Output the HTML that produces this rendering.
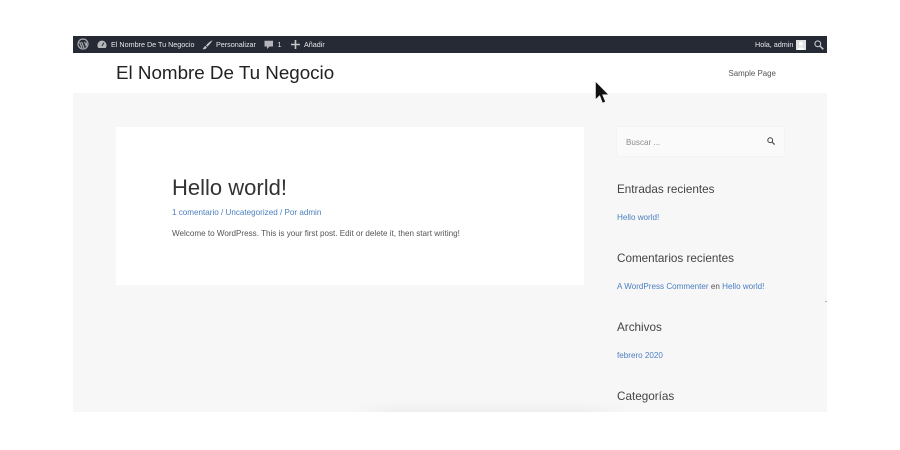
<!DOCTYPE html>
<html lang="es"><head><meta charset="utf-8"><title>El Nombre De Tu Negocio</title>
<style>
html,body{margin:0;padding:0;background:#fff}
body{width:900px;height:450px;overflow:hidden;position:relative;font-family:"Liberation Sans",sans-serif}
#wrap{position:absolute;inset:0;filter:blur(.35px)}
.a{position:absolute;white-space:nowrap;line-height:1}
.bar{color:#e6e7e9;font-size:7.2px}
.blue{color:#4b7fbf}
.h{color:#444;font-size:11.7px}
.s{font-size:8.1px}
svg{position:absolute;overflow:visible}
</style></head><body><div id="wrap">
<div class="a" style="left:73px;top:36px;width:754px;height:17px;background:#262a35"></div>
<div class="a" style="left:73px;top:53px;width:754px;height:40px;background:#fff"></div>
<div class="a" style="left:73px;top:93px;width:754px;height:319px;background:#f7f7f8"></div>
<div class="a" style="left:355px;top:402px;width:270px;height:10px;background:linear-gradient(#f7f7f800,#eeeeee);-webkit-mask-image:linear-gradient(90deg,transparent,#000 15%,#000 85%,transparent)"></div>
<div class="a" style="left:825px;top:301px;width:2px;height:1px;background:#d9a0a0"></div>

<svg style="left:77px;top:38px" width="12" height="12" viewBox="0 0 12 12"><circle cx="6" cy="6" r="5" fill="none" stroke="#a7aaad" stroke-width="1.200"/><path d="M2.600 4 5 10M4.600 3.800 7 10M7.500 3.800 9.300 8.200 9.600 4.500" fill="none" stroke="#a7aaad" stroke-width="1.200"/></svg>
<svg style="left:97px;top:40px" width="10" height="9" viewBox="0 0 10 9"><path d="M1.300 8A4.600 4.600 0 1 1 8.700 8Z" fill="#b4b6ba"/><path d="M5 6 6.800 2.800" stroke="#262a35" stroke-width="1"/></svg>
<div class="a bar" style="left:111px;top:41px">El Nombre De Tu Negocio</div>
<svg style="left:202px;top:40px" width="11" height="10" viewBox="0 0 11 10"><path d="M10.500.3C8 1.500 5.500 3.500 4 5.500L5.300 6.700C7.300 5 9.300 2.500 10.500.3ZM3.400 6C2 6.300 2 8 .5 9.200 2.500 9.500 4.500 8.800 4.700 7.200Z" fill="#c6c7ca"/></svg>
<div class="a bar" style="left:216px;top:41px">Personalizar</div>
<svg style="left:264px;top:40px" width="10" height="10" viewBox="0 0 10 10"><path d="M.5.800H9V6.500H5.500L3 9V6.500H.5Z" fill="#b4b6ba"/></svg>
<div class="a bar" style="left:277.500px;top:41px">1</div>
<svg style="left:291px;top:40px" width="9" height="9" viewBox="0 0 9 9"><path d="M4.500 0V9M0 4.500H9" stroke="#c6c7ca" stroke-width="1.600"/></svg>
<div class="a bar" style="left:304px;top:41px">Añadir</div>
<div class="a bar" style="left:755px;top:41px">Hola, admin</div>
<div class="a" style="left:796px;top:39.500px;width:10px;height:10px;background:#e2e2e2"></div>
<svg style="left:796px;top:39.500px" width="10" height="10" viewBox="0 0 10 10"><circle cx="5" cy="3.800" r="2" fill="#fff"/><path d="M1.500 10C1.500 6.500 8.500 6.500 8.500 10Z" fill="#fff"/></svg>
<svg style="left:814px;top:39.500px" width="10" height="10" viewBox="0 0 10 10"><circle cx="3.800" cy="3.800" r="2.900" fill="none" stroke="#c6c7ca" stroke-width="1.100"/><path d="M6 6 9.300 9.300" stroke="#c6c7ca" stroke-width="1.500"/></svg>

<div class="a" style="left:116px;top:64px;font-size:18.800px;color:#222">El Nombre De Tu Negocio</div>
<div class="a" style="left:728.500px;top:69.500px;font-size:7.900px;color:#555">Sample Page</div>

<svg style="left:595px;top:81px" width="14" height="24" viewBox="0 0 14 24"><path d="M.5.500V18.500L4.700 14.500 7.500 22 10.500 20.800 7.500 13.700H13.500Z" fill="#111" stroke="#fff" stroke-width=".5"/></svg>

<div class="a" style="left:116px;top:127px;width:468px;height:158px;background:#fff"></div>
<div class="a" style="left:172px;top:176.500px;font-size:22px;color:#333">Hello world!</div>
<div class="a blue s" style="left:172px;top:209px">1 comentario / Uncategorized / Por admin</div>
<div class="a s" style="left:172px;top:230px;color:#555">Welcome to WordPress. This is your first post. Edit or delete it, then start writing!</div>

<div class="a" style="left:617px;top:127px;width:167px;height:29px;background:#fafafa;box-shadow:0 0 1px #ececec"></div>
<div class="a s" style="left:626px;top:139px;color:#8b8b8b">Buscar ...</div>
<svg style="left:767px;top:137px" width="8" height="8" viewBox="0 0 8 8"><circle cx="3.200" cy="3.200" r="2.400" fill="none" stroke="#444" stroke-width="1"/><path d="M5 5 7.600 7.600" stroke="#444" stroke-width="1.200"/></svg>

<div class="a h" style="left:617px;top:184px">Entradas recientes</div>
<div class="a blue s" style="left:617px;top:214px">Hello world!</div>
<div class="a h" style="left:617px;top:253px">Comentarios recientes</div>
<div class="a s" style="left:617px;top:283px;color:#555"><span class="blue">A WordPress Commenter</span> en <span class="blue">Hello world!</span></div>
<div class="a h" style="left:617px;top:322px">Archivos</div>
<div class="a blue s" style="left:617px;top:352px">febrero 2020</div>
<div class="a h" style="left:617px;top:391px">Categorías</div>
</div></body></html>
